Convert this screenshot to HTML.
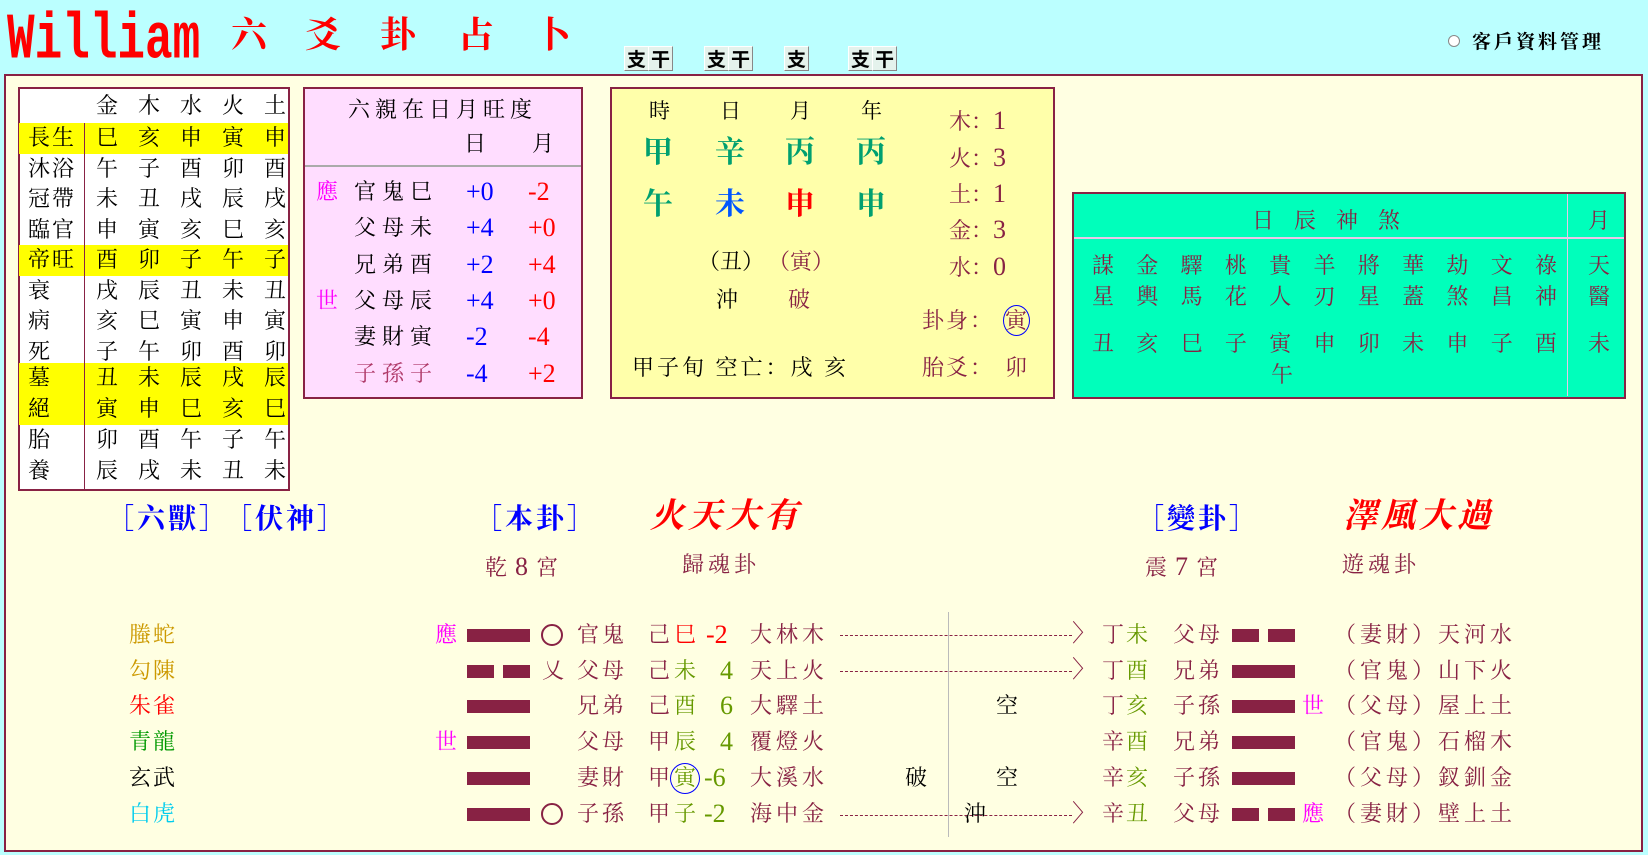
<!DOCTYPE html>
<html><head><meta charset="utf-8"><style>
*{margin:0;padding:0;box-sizing:border-box}
body{width:1648px;height:855px;background:#BBFFFF;position:relative;overflow:hidden;font-family:"Liberation Serif","Noto Serif CJK SC",serif}
.p{position:absolute;white-space:nowrap;line-height:1}
.f{font-size:22px}
.m{color:#882244}
.o{color:#669900}
.num{font-family:"Liberation Serif",serif;font-size:26px}
.box{position:absolute;border:2px solid #882244}
.btn{position:absolute;top:46px;height:25px;width:25px;background:#E4F2EC;border:1px solid;border-color:#fff #888 #888 #fff;font-size:19px;font-weight:bold;text-align:center;line-height:23px;font-family:"Noto Sans CJK TC",sans-serif}
.row{position:absolute;left:19px;width:269px;height:31px}
.row span{position:absolute;top:4px;font-size:22px;line-height:1;white-space:nowrap}
.bar{position:absolute;height:13px;background:#882244}
.dot{position:absolute;border-top:1px dashed #882244;height:0}
.circ{position:absolute;border:1px solid #0000ff;border-radius:50%}
</style></head><body>
<div class="p" style="left:7px;top:8px;font:bold 46px 'Liberation Mono',monospace;color:#ff0000;transform:scaleY(1.42);transform-origin:0 0;line-height:1;">William</div>
<div class="p" style="left:231px;top:17px;font-size:36px;color:#f00;font-weight:bold">六</div>
<div class="p" style="left:305px;top:17px;font-size:36px;color:#f00;font-weight:bold">爻</div>
<div class="p" style="left:380px;top:17px;font-size:36px;color:#f00;font-weight:bold">卦</div>
<div class="p" style="left:458px;top:17px;font-size:36px;color:#f00;font-weight:bold">占</div>
<div class="p" style="left:535px;top:17px;font-size:36px;color:#f00;font-weight:bold">卜</div>
<div class="btn" style="left:624px">支</div><div class="btn" style="left:648px">干</div>
<div class="btn" style="left:704px">支</div><div class="btn" style="left:728px">干</div>
<div class="btn" style="left:784px">支</div>
<div class="btn" style="left:848px">支</div><div class="btn" style="left:872px">干</div>
<div style="position:absolute;left:1448px;top:35px;width:12px;height:12px;border-radius:50%;background:#fff;border:1px solid #888"></div>
<div class="p" style="left:1472px;top:31px;font-size:19px;font-weight:bold;letter-spacing:3px;font-family:'Noto Serif CJK SC',serif">客戶資料管理</div>

<div style="position:absolute;left:4px;top:74px;width:1639px;height:778px;background:#FFFFE2;border:2px solid #882244"></div>

<!-- table 1 -->
<div class="box" style="left:18px;top:87px;width:272px;height:404px;background:#fff"></div>
<div class="p f" style="left:96px;top:95px;letter-spacing:20px">金木水火土</div>
<div class="row" style="top:123px;background:#ffff00"><span style="left:9px;letter-spacing:2px">長生</span><span style="left:77px;letter-spacing:20px">巳亥申寅申</span></div>
<div class="row" style="top:153.5px"><span style="left:9px;letter-spacing:2px">沐浴</span><span style="left:77px;letter-spacing:20px">午子酉卯酉</span></div>
<div class="row" style="top:184px"><span style="left:9px;letter-spacing:2px">冠帶</span><span style="left:77px;letter-spacing:20px">未丑戌辰戌</span></div>
<div class="row" style="top:214.5px"><span style="left:9px;letter-spacing:2px">臨官</span><span style="left:77px;letter-spacing:20px">申寅亥巳亥</span></div>
<div class="row" style="top:245px;background:#ffff00"><span style="left:9px;letter-spacing:2px">帝旺</span><span style="left:77px;letter-spacing:20px">酉卯子午子</span></div>
<div class="row" style="top:275.5px"><span style="left:9px">衰</span><span style="left:77px;letter-spacing:20px">戌辰丑未丑</span></div>
<div class="row" style="top:306px"><span style="left:9px">病</span><span style="left:77px;letter-spacing:20px">亥巳寅申寅</span></div>
<div class="row" style="top:336.5px"><span style="left:9px">死</span><span style="left:77px;letter-spacing:20px">子午卯酉卯</span></div>
<div class="row" style="top:363px;background:#ffff00"><span style="left:9px">墓</span><span style="left:77px;letter-spacing:20px">丑未辰戌辰</span></div>
<div class="row" style="top:394px;background:#ffff00"><span style="left:9px">絕</span><span style="left:77px;letter-spacing:20px">寅申巳亥巳</span></div>
<div class="row" style="top:425px"><span style="left:9px">胎</span><span style="left:77px;letter-spacing:20px">卯酉午子午</span></div>
<div class="row" style="top:456px"><span style="left:9px">養</span><span style="left:77px;letter-spacing:20px">辰戌未丑未</span></div>
<div style="position:absolute;left:84px;top:123px;width:1px;height:366px;background:#882244"></div>

<!-- table 2 -->
<div class="box" style="left:303px;top:87px;width:280px;height:312px;background:#FFDDFF"></div>
<div class="p f" style="left:348px;top:99px;letter-spacing:5px">六親在日月旺度</div>
<div class="p f" style="left:464px;top:133px">日</div>
<div class="p f" style="left:532px;top:133px">月</div>
<div style="position:absolute;left:305px;top:165px;width:276px;height:2px;background:#aaa"></div>
<div class="p f" style="left:316px;top:181px;color:#ff00ff">應</div><div class="p f" style="left:354px;top:181px;letter-spacing:6px">官鬼巳</div><div class="p num" style="left:466px;top:179px;color:#00f">+0</div><div class="p num" style="left:528px;top:179px;color:#f00">-2</div>
<div class="p f" style="left:354px;top:217px;letter-spacing:6px">父母未</div><div class="p num" style="left:466px;top:215px;color:#00f">+4</div><div class="p num" style="left:528px;top:215px;color:#f00">+0</div>
<div class="p f" style="left:354px;top:254px;letter-spacing:6px">兄弟酉</div><div class="p num" style="left:466px;top:252px;color:#00f">+2</div><div class="p num" style="left:528px;top:252px;color:#f00">+4</div>
<div class="p f" style="left:316px;top:290px;color:#ff00ff">世</div><div class="p f" style="left:354px;top:290px;letter-spacing:6px">父母辰</div><div class="p num" style="left:466px;top:288px;color:#00f">+4</div><div class="p num" style="left:528px;top:288px;color:#f00">+0</div>
<div class="p f" style="left:354px;top:326px;letter-spacing:6px">妻財寅</div><div class="p num" style="left:466px;top:324px;color:#00f">-2</div><div class="p num" style="left:528px;top:324px;color:#f00">-4</div>
<div class="p f" style="left:354px;top:363px;letter-spacing:6px;color:#B03A6A">子孫子</div><div class="p num" style="left:466px;top:361px;color:#00f">-4</div><div class="p num" style="left:528px;top:361px;color:#f00">+2</div>

<!-- table 3 -->
<div class="box" style="left:610px;top:87px;width:445px;height:312px;background:#FFFFAA"></div>
<div class="p" style="left:649px;top:101px;font-size:21px">時</div>
<div class="p" style="left:720px;top:101px;font-size:21px">日</div>
<div class="p" style="left:790px;top:101px;font-size:21px">月</div>
<div class="p" style="left:861px;top:101px;font-size:21px">年</div>
<div class="p" style="left:643px;top:138px;font-size:30px;font-weight:bold;color:#00A070">甲</div>
<div class="p" style="left:715px;top:138px;font-size:30px;font-weight:bold;color:#00A070">辛</div>
<div class="p" style="left:785px;top:138px;font-size:30px;font-weight:bold;color:#00A070">丙</div>
<div class="p" style="left:856px;top:138px;font-size:30px;font-weight:bold;color:#00A070">丙</div>
<div class="p" style="left:643px;top:190px;font-size:30px;font-weight:bold;color:#00A070">午</div>
<div class="p" style="left:715px;top:190px;font-size:30px;font-weight:bold;color:#0055FF">未</div>
<div class="p" style="left:785px;top:190px;font-size:30px;font-weight:bold;color:#f00">申</div>
<div class="p" style="left:856px;top:190px;font-size:30px;font-weight:bold;color:#00A070">申</div>
<div class="p f" style="left:698px;top:251px">（丑）</div>
<div class="p f m" style="left:768px;top:251px">（寅）</div>
<div class="p f" style="left:716px;top:289px">沖</div>
<div class="p f m" style="left:788px;top:289px">破</div>
<div class="p f" style="left:632px;top:357px;letter-spacing:3px">甲子旬 空亡：戌 亥</div>
<div class="p f m" style="left:949px;top:108px">木：<span class="num">1</span></div>
<div class="p f m" style="left:949px;top:145px">火：<span class="num">3</span></div>
<div class="p f m" style="left:949px;top:181px">土：<span class="num">1</span></div>
<div class="p f m" style="left:949px;top:217px">金：<span class="num">3</span></div>
<div class="p f m" style="left:949px;top:254px">水：<span class="num">0</span></div>
<div class="p f m" style="left:922px;top:310px;letter-spacing:2px">卦身：</div>
<div class="p f m" style="left:1005px;top:310px">寅</div>
<div class="circ" style="left:1003px;top:305px;width:27px;height:31px"></div>
<div class="p f m" style="left:922px;top:357px;letter-spacing:2px">胎爻：</div>
<div class="p f m" style="left:1005px;top:357px">卯</div>

<!-- table 4 -->
<div class="box" style="left:1072px;top:192px;width:554px;height:207px;background:#00FFBB"></div>
<div style="position:absolute;left:1074px;top:237px;width:550px;height:2px;background:#E8C8E8"></div>
<div style="position:absolute;left:1567px;top:194px;width:1px;height:202px;background:#E8C8E8"></div>
<div class="p f m" style="left:1252px;top:210px;letter-spacing:20px">日辰神煞</div>
<div class="p f m" style="left:1588px;top:210px">月</div>
<div class="p f m" style="left:1092px;top:255px;letter-spacing:22.3px">謀金驛桃貴羊將華劫文祿</div>
<div class="p f m" style="left:1092px;top:286px;letter-spacing:22.3px">星輿馬花人刃星蓋煞昌神</div>
<div class="p f m" style="left:1092px;top:333px;letter-spacing:22.3px">丑亥巳子寅申卯未申子酉</div>
<div class="p f m" style="left:1271px;top:364px">午</div>
<div class="p f m" style="left:1588px;top:255px">天</div>
<div class="p f m" style="left:1588px;top:286px">醫</div>
<div class="p f m" style="left:1588px;top:333px">未</div>

<!-- lower titles -->
<div class="p" style="left:106px;top:506px;font-size:28px;font-weight:bold;color:#0000ff;letter-spacing:3px">［六獸］</div>
<div class="p" style="left:224px;top:506px;font-size:28px;font-weight:bold;color:#0000ff;letter-spacing:3px">［伏神］</div>
<div class="p" style="left:474px;top:506px;font-size:28px;font-weight:bold;color:#0000ff;letter-spacing:3px">［本卦］</div>
<div class="p" style="left:650px;top:500px;font-size:34px;font-weight:bold;font-style:italic;color:#f00;letter-spacing:4px">火天大有</div>
<div class="p f m" style="left:485px;top:554px;letter-spacing:8px">乾<span class="num">8</span>宮</div>
<div class="p f m" style="left:682px;top:554px;letter-spacing:4px">歸魂卦</div>
<div class="p" style="left:1136px;top:506px;font-size:28px;font-weight:bold;color:#0000ff;letter-spacing:3px">［變卦］</div>
<div class="p" style="left:1343px;top:500px;font-size:34px;font-weight:bold;font-style:italic;color:#f00;letter-spacing:4px">澤風大過</div>
<div class="p f m" style="left:1145px;top:554px;letter-spacing:8px">震<span class="num">7</span>宮</div>
<div class="p f m" style="left:1342px;top:554px;letter-spacing:4px">遊魂卦</div>

<!-- beasts -->
<div class="p f" style="left:129px;top:624px;color:#CC9900;letter-spacing:2px">螣蛇</div>
<div class="p f" style="left:129px;top:660px;color:#CC9900;letter-spacing:2px">勾陳</div>
<div class="p f" style="left:129px;top:695px;color:#ff0000;letter-spacing:2px">朱雀</div>
<div class="p f" style="left:129px;top:731px;color:#009900;letter-spacing:2px">青龍</div>
<div class="p f" style="left:129px;top:767px;color:#000;letter-spacing:2px">玄武</div>
<div class="p f" style="left:129px;top:803px;color:#00CCEE;letter-spacing:2px">白虎</div>

<!-- left hexagram -->
<div class="p f" style="left:435px;top:624px;color:#ff00ff">應</div>
<div class="p f" style="left:435px;top:731px;color:#ff00ff">世</div>
<div class="bar" style="left:467px;top:629px;width:63px"></div>
<div class="bar" style="left:467px;top:665px;width:27px"></div><div class="bar" style="left:503px;top:665px;width:27px"></div>
<div class="bar" style="left:467px;top:700px;width:63px"></div>
<div class="bar" style="left:467px;top:736px;width:63px"></div>
<div class="bar" style="left:467px;top:772px;width:63px"></div>
<div class="bar" style="left:467px;top:808px;width:63px"></div>
<div class="circ" style="left:541px;top:624px;width:22px;height:22px;border:2px solid #882244"></div>
<div class="circ" style="left:541px;top:803px;width:22px;height:22px;border:2px solid #882244"></div>
<div class="p f m" style="left:542px;top:660px">乂</div>

<div class="p f m" style="left:577px;top:624px;letter-spacing:3px">官鬼</div><div class="p f m" style="left:648px;top:624px">己</div><div class="p f" style="left:674px;top:624px;color:#f00">巳</div><div class="p num" style="left:706px;top:622px;color:#f00">-2</div><div class="p f m" style="left:750px;top:624px;letter-spacing:4px">大林木</div>
<div class="p f m" style="left:577px;top:660px;letter-spacing:3px">父母</div><div class="p f m" style="left:648px;top:660px">己</div><div class="p f o" style="left:674px;top:660px">未</div><div class="p num o" style="left:720px;top:658px">4</div><div class="p f m" style="left:750px;top:660px;letter-spacing:4px">天上火</div>
<div class="p f m" style="left:577px;top:695px;letter-spacing:3px">兄弟</div><div class="p f m" style="left:648px;top:695px">己</div><div class="p f o" style="left:674px;top:695px">酉</div><div class="p num o" style="left:720px;top:693px">6</div><div class="p f m" style="left:750px;top:695px;letter-spacing:4px">大驛土</div>
<div class="p f m" style="left:577px;top:731px;letter-spacing:3px">父母</div><div class="p f m" style="left:648px;top:731px">甲</div><div class="p f o" style="left:674px;top:731px">辰</div><div class="p num o" style="left:720px;top:729px">4</div><div class="p f m" style="left:750px;top:731px;letter-spacing:4px">覆燈火</div>
<div class="p f m" style="left:577px;top:767px;letter-spacing:3px">妻財</div><div class="p f m" style="left:648px;top:767px">甲</div><div class="p f o" style="left:674px;top:767px">寅</div><div class="circ" style="left:670px;top:763px;width:30px;height:31px"></div><div class="p num o" style="left:704px;top:765px">-6</div><div class="p f m" style="left:750px;top:767px;letter-spacing:4px">大溪水</div>
<div class="p f m" style="left:577px;top:803px;letter-spacing:3px">子孫</div><div class="p f m" style="left:648px;top:803px">甲</div><div class="p f o" style="left:674px;top:803px">子</div><div class="p num o" style="left:704px;top:801px">-2</div><div class="p f m" style="left:750px;top:803px;letter-spacing:4px">海中金</div>

<!-- middle -->
<div class="dot" style="left:840px;top:635px;width:232px"></div>
<div class="dot" style="left:840px;top:671px;width:232px"></div>
<div class="dot" style="left:840px;top:815px;width:232px"></div>
<div class="p m" style="left:1072px;top:622px;font-size:24px">〉</div>
<div class="p m" style="left:1072px;top:658px;font-size:24px">〉</div>
<div class="p m" style="left:1072px;top:802px;font-size:24px">〉</div>
<div style="position:absolute;left:948px;top:612px;width:1px;height:225px;background:#bbb"></div>
<div class="p f" style="left:905px;top:767px">破</div>
<div class="p f" style="left:996px;top:695px">空</div>
<div class="p f" style="left:996px;top:767px">空</div>
<div class="p f" style="left:964px;top:803px">沖</div>

<!-- right hexagram -->
<div class="p f m" style="left:1102px;top:624px">丁</div><div class="p f o" style="left:1126px;top:624px">未</div><div class="p f m" style="left:1173px;top:624px;letter-spacing:3px">父母</div>
<div class="p f m" style="left:1102px;top:660px">丁</div><div class="p f o" style="left:1126px;top:660px">酉</div><div class="p f m" style="left:1173px;top:660px;letter-spacing:3px">兄弟</div>
<div class="p f m" style="left:1102px;top:695px">丁</div><div class="p f o" style="left:1126px;top:695px">亥</div><div class="p f m" style="left:1173px;top:695px;letter-spacing:3px">子孫</div>
<div class="p f m" style="left:1102px;top:731px">辛</div><div class="p f o" style="left:1126px;top:731px">酉</div><div class="p f m" style="left:1173px;top:731px;letter-spacing:3px">兄弟</div>
<div class="p f m" style="left:1102px;top:767px">辛</div><div class="p f o" style="left:1126px;top:767px">亥</div><div class="p f m" style="left:1173px;top:767px;letter-spacing:3px">子孫</div>
<div class="p f m" style="left:1102px;top:803px">辛</div><div class="p f o" style="left:1126px;top:803px">丑</div><div class="p f m" style="left:1173px;top:803px;letter-spacing:3px">父母</div>
<div class="bar" style="left:1232px;top:629px;width:27px"></div><div class="bar" style="left:1268px;top:629px;width:27px"></div>
<div class="bar" style="left:1232px;top:665px;width:63px"></div>
<div class="bar" style="left:1232px;top:700px;width:63px"></div>
<div class="bar" style="left:1232px;top:736px;width:63px"></div>
<div class="bar" style="left:1232px;top:772px;width:63px"></div>
<div class="bar" style="left:1232px;top:808px;width:27px"></div><div class="bar" style="left:1268px;top:808px;width:27px"></div>
<div class="p f" style="left:1302px;top:695px;color:#ff00ff">世</div>
<div class="p f" style="left:1302px;top:803px;color:#ff00ff">應</div>
<div class="p f m" style="left:1334px;top:624px;letter-spacing:4px">（妻財）天河水</div>
<div class="p f m" style="left:1334px;top:660px;letter-spacing:4px">（官鬼）山下火</div>
<div class="p f m" style="left:1334px;top:695px;letter-spacing:4px">（父母）屋上土</div>
<div class="p f m" style="left:1334px;top:731px;letter-spacing:4px">（官鬼）石榴木</div>
<div class="p f m" style="left:1334px;top:767px;letter-spacing:4px">（父母）釵釧金</div>
<div class="p f m" style="left:1334px;top:803px;letter-spacing:4px">（妻財）壁上土</div>
</body></html>
